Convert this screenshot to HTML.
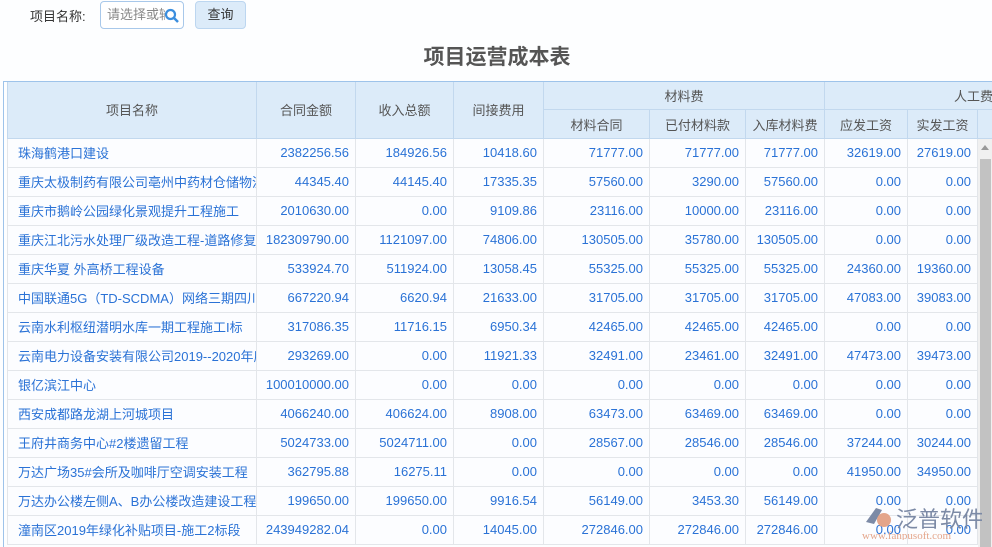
<!DOCTYPE html>
<html><head><meta charset="utf-8"><style>
*{margin:0;padding:0;box-sizing:border-box}
body{width:992px;height:547px;overflow:hidden;background:#fdfeff;font-family:"Liberation Sans","Noto Sans CJK SC",sans-serif;font-size:13px;color:#333;position:relative}
.lbl{position:absolute;left:30px;top:6px;font-size:13px;color:#333}
.inp{position:absolute;left:100px;top:1px;width:84px;height:28px;border:1px solid #a8c8ea;border-radius:4px;background:#fff;color:#888;font-size:13px;line-height:26px;padding-left:6px;overflow:hidden;white-space:nowrap}
.inp span{display:inline-block;width:58px;overflow:hidden;vertical-align:top}
.inp svg{position:absolute;right:3px;top:6px}
.btn{position:absolute;left:195px;top:1px;width:51px;height:28px;border:1px solid #bcd6f0;border-radius:4px;background:#dcebf9;text-align:center;line-height:26px;color:#333}
h1{position:absolute;left:0;width:994px;top:41px;text-align:center;font-size:21px;font-weight:bold;color:#555}
.wrap{position:absolute;left:3px;top:81px;width:989px;height:466px;border-left:1px solid #9ec3ea;border-top:1px solid #9ec3ea;overflow:hidden}
table{border-collapse:collapse;table-layout:fixed;position:absolute;left:3px;top:-2px;width:998px}
td{height:29px;border:1px solid #e3e6ea;white-space:nowrap;overflow:hidden;text-overflow:clip;padding:0 6px 2px;text-align:right;color:#2a72d6;background:#fcfdff}
td.n{text-align:left;padding-left:10px;padding-right:0}
th{font-weight:normal;color:#555;background:#dcebf9;border:1px solid #c2d8ee;height:29px;white-space:nowrap;overflow:hidden}
.sb{position:absolute;left:974px;top:57px;width:15px;height:410px;background:#f0f0f0}
.sb .t{position:absolute;left:2px;top:20px;width:11px;height:390px;background:#c2c2c2}
.sb .a{position:absolute;left:3px;top:6px;width:0;height:0;border-left:4px solid transparent;border-right:4px solid transparent;border-bottom:5px solid #999}
.logo{position:absolute;left:862px;top:500px;}
</style></head><body>
<div class="lbl">项目名称:</div>
<div class="inp"><span>请选择或输</span><svg width="16" height="16" viewBox="0 0 16 16"><circle cx="6.5" cy="6.5" r="4.5" fill="none" stroke="#3b8ede" stroke-width="2.2"/><path d="M10 10l4 4" stroke="#3b8ede" stroke-width="2.5"/></svg></div>
<div class="btn">查询</div>
<h1>项目运营成本表</h1>
<div class="wrap">
<table>
<colgroup><col style="width:249px"><col style="width:99px"><col style="width:98px"><col style="width:90px"><col style="width:106px"><col style="width:96px"><col style="width:79px"><col style="width:83px"><col style="width:70px"><col style="width:28px"></colgroup>
<tr><th rowspan="2">项目名称</th><th rowspan="2">合同金额</th><th rowspan="2">收入总额</th><th rowspan="2">间接费用</th><th colspan="3">材料费</th><th colspan="3" style="text-align:right;padding-right:12px">人工费</th></tr>
<tr><th>材料合同</th><th>已付材料款</th><th>入库材料费</th><th>应发工资</th><th>实发工资</th><th></th></tr>
<tr><td class="n">珠海鹤港口建设</td><td>2382256.56</td><td>184926.56</td><td>10418.60</td><td>71777.00</td><td>71777.00</td><td>71777.00</td><td>32619.00</td><td>27619.00</td><td></td></tr>
<tr><td class="n">重庆太极制药有限公司亳州中药材仓储物流</td><td>44345.40</td><td>44145.40</td><td>17335.35</td><td>57560.00</td><td>3290.00</td><td>57560.00</td><td>0.00</td><td>0.00</td><td></td></tr>
<tr><td class="n">重庆市鹅岭公园绿化景观提升工程施工</td><td>2010630.00</td><td>0.00</td><td>9109.86</td><td>23116.00</td><td>10000.00</td><td>23116.00</td><td>0.00</td><td>0.00</td><td></td></tr>
<tr><td class="n">重庆江北污水处理厂级改造工程-道路修复</td><td>182309790.00</td><td>1121097.00</td><td>74806.00</td><td>130505.00</td><td>35780.00</td><td>130505.00</td><td>0.00</td><td>0.00</td><td></td></tr>
<tr><td class="n">重庆华夏 外高桥工程设备</td><td>533924.70</td><td>511924.00</td><td>13058.45</td><td>55325.00</td><td>55325.00</td><td>55325.00</td><td>24360.00</td><td>19360.00</td><td></td></tr>
<tr><td class="n">中国联通5G（TD-SCDMA）网络三期四川</td><td>667220.94</td><td>6620.94</td><td>21633.00</td><td>31705.00</td><td>31705.00</td><td>31705.00</td><td>47083.00</td><td>39083.00</td><td></td></tr>
<tr><td class="n">云南水利枢纽潜明水库一期工程施工I标</td><td>317086.35</td><td>11716.15</td><td>6950.34</td><td>42465.00</td><td>42465.00</td><td>42465.00</td><td>0.00</td><td>0.00</td><td></td></tr>
<tr><td class="n">云南电力设备安装有限公司2019--2020年度</td><td>293269.00</td><td>0.00</td><td>11921.33</td><td>32491.00</td><td>23461.00</td><td>32491.00</td><td>47473.00</td><td>39473.00</td><td></td></tr>
<tr><td class="n">银亿滨江中心</td><td>100010000.00</td><td>0.00</td><td>0.00</td><td>0.00</td><td>0.00</td><td>0.00</td><td>0.00</td><td>0.00</td><td></td></tr>
<tr><td class="n">西安成都路龙湖上河城项目</td><td>4066240.00</td><td>406624.00</td><td>8908.00</td><td>63473.00</td><td>63469.00</td><td>63469.00</td><td>0.00</td><td>0.00</td><td></td></tr>
<tr><td class="n">王府井商务中心#2楼遗留工程</td><td>5024733.00</td><td>5024711.00</td><td>0.00</td><td>28567.00</td><td>28546.00</td><td>28546.00</td><td>37244.00</td><td>30244.00</td><td></td></tr>
<tr><td class="n">万达广场35#会所及咖啡厅空调安装工程</td><td>362795.88</td><td>16275.11</td><td>0.00</td><td>0.00</td><td>0.00</td><td>0.00</td><td>41950.00</td><td>34950.00</td><td></td></tr>
<tr><td class="n">万达办公楼左侧A、B办公楼改造建设工程</td><td>199650.00</td><td>199650.00</td><td>9916.54</td><td>56149.00</td><td>3453.30</td><td>56149.00</td><td>0.00</td><td>0.00</td><td></td></tr>
<tr><td class="n">潼南区2019年绿化补贴项目-施工2标段</td><td>243949282.04</td><td>0.00</td><td>14045.00</td><td>272846.00</td><td>272846.00</td><td>272846.00</td><td>0.00</td><td>0.00</td><td></td></tr>
</table>
<div class="sb"><div class="a"></div><div class="t"></div></div>
</div>
<div class="logo"><svg width="120" height="40"><path d="M4 22l10-14 6 2-8 14z" fill="#7c8aa6"/><circle cx="22" cy="20" r="7" fill="#e4a58a"/><text x="34" y="27" font-size="22" fill="#7c8aa6" font-family="Noto Sans CJK SC,sans-serif">泛普软件</text><text x="0" y="39" font-size="11" fill="#e4a58a" font-family="Liberation Serif,serif">www.fanpusoft.com</text></svg></div>
</body></html>
